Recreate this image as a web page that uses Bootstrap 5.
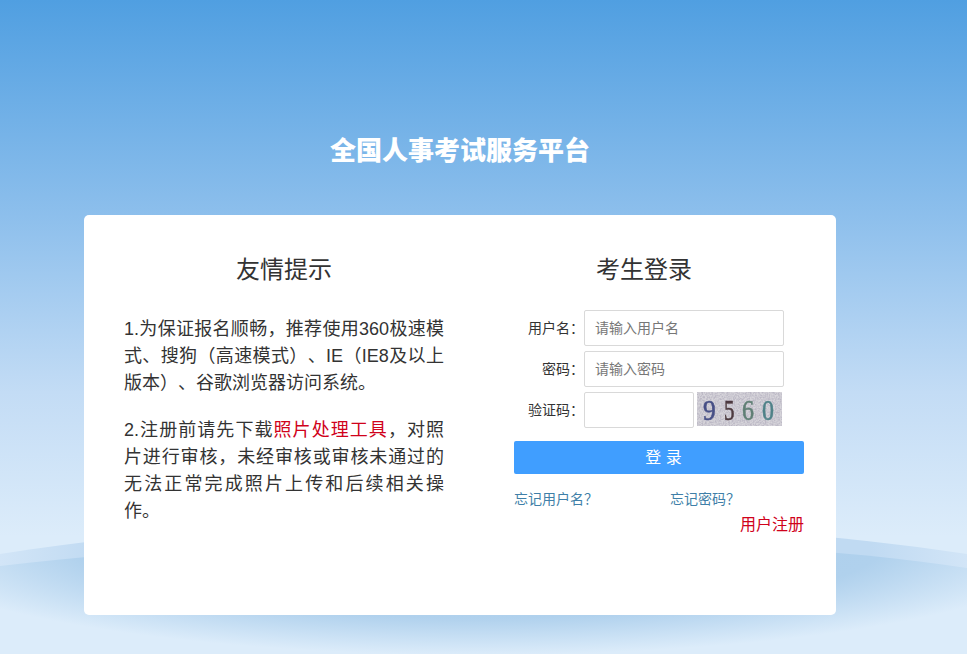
<!doctype html>
<html lang="zh-CN">

<head>
  <meta charset="utf-8">
  <meta name="viewport" content="width=device-width, initial-scale=1">
  <title>全国人事考试服务平台</title>
  <link href="https://cdn.jsdelivr.net/npm/bootstrap@5.3.5/dist/css/bootstrap.min.css" rel="stylesheet">
  <style>
    html, body {
      height: 100%;
    }

    body {
      font-family: "Liberation Sans", "Noto Sans CJK SC", sans-serif;
      background: linear-gradient(180deg, #509fe1 0%, #8dbfec 33%, #c3dcf5 60%, #dcecfa 82%, #dcecfa 100%);
      color: #333;
      overflow: hidden;
      text-spacing-trim: space-all;
      font-kerning: none;
    }

    .bg-waves {
      position: absolute;
      left: 0;
      top: 0;
      width: 967px;
      height: 654px;
    }

    .login-page {
      position: relative;
      width: 752px;
      margin-left: 84px;
      padding-top: 134px;
    }

    .site-title {
      font-size: 26px;
      line-height: 34px;
      font-weight: 900;
      color: #fff;
      margin: 0 0 47px;
    }

    .login-box {
      height: 400px;
      padding: 40px 32px 0 40px;
      border-radius: 5px;
    }

    .tips-col {
      width: 320px;
    }

    .form-col {
      width: 290px;
    }

    .box-heading {
      font-size: 24px;
      line-height: 30px;
      font-weight: 400;
      margin: 0 0 31px;
    }

    .form-heading {
      width: 260px;
      margin-bottom: 25px;
    }

    .tips-col p {
      font-size: 18px;
      line-height: 27px;
      text-align: justify;
      margin: 0 0 20px;
    }

    .red-link {
      color: #d0021b;
      text-decoration: none;
    }

    .field-row {
      height: 36px;
      margin-bottom: 5px;
    }

    .field-label {
      width: 70px;
      font-size: 14px;
      text-align: right;
      color: #333;
      margin: 0;
    }

    .field-input {
      width: 200px;
      height: 36px;
      padding: 6px 10px;
      font-size: 14px;
      border: 1px solid #d9d9d9;
      border-radius: 2px;
    }

    .field-input::placeholder {
      color: #777;
    }

    .code-input {
      width: 110px;
    }

    .captcha {
      width: 85px;
      height: 34px;
      margin-left: 3px;
      align-self: flex-start;
    }

    .login-btn {
      height: 33px;
      margin-top: 8px;
      padding: 0 0 0 9px;
      font-size: 16px;
      background: #409eff;
      border: 0;
      border-radius: 2px;
      color: #fff;
    }

    .login-links {
      margin-top: 14px;
      font-size: 14px;
      line-height: 22px;
    }

    .login-links a {
      color: #3f7fa8;
      text-decoration: none;
    }

    .forget-name {
      width: 156px;
    }

    .register-line {
      font-size: 16px;
      line-height: 22px;
      margin-top: 4px;
    }
  </style>
</head>

<body>
  <svg class="bg-waves" viewBox="0 0 967 654" aria-hidden="true">
    <defs>
      <radialGradient id="lowGrad" gradientUnits="userSpaceOnUse" cx="0" cy="0" r="1" gradientTransform="translate(480 540) scale(600 115)">
        <stop offset="0" stop-color="#a8cceb"/>
        <stop offset="0.68" stop-color="#b0d1ed"/>
        <stop offset="1" stop-color="#dcecfa"/>
      </radialGradient>
      <linearGradient id="bandGrad" x1="0" y1="0" x2="1" y2="0">
        <stop offset="0" stop-color="#d2e5f7"/>
        <stop offset="0.1" stop-color="#c0daf2"/>
        <stop offset="0.9" stop-color="#c0daf2"/>
        <stop offset="1" stop-color="#d2e5f7"/>
      </linearGradient>
    </defs>
    <path d="M0 554C150 530 300 522 480 522C660 522 820 532 967 554V654H0Z" fill="url(#bandGrad)"/>
    <path d="M0 566C150 548 300 540 480 540C660 540 820 546 967 568V654H0Z" fill="url(#lowGrad)"/>
  </svg>

  <div class="login-page">
    <h1 class="site-title text-center">全国人事考试服务平台</h1>

    <div class="login-box bg-white d-flex justify-content-between">
      <div class="tips-col">
        <h2 class="box-heading text-center">友情提示</h2>
        <p>1.为保证报名顺畅，推荐使用360极速模式、搜狗（高速模式）、IE（IE8及以上版本）、谷歌浏览器访问系统。</p>
        <p>2.注册前请先下载<a href="#" class="red-link">照片处理工具</a>，对照片进行审核，未经审核或审核未通过的无法正常完成照片上传和后续相关操作。</p>
      </div>

      <div class="form-col">
        <h2 class="box-heading form-heading text-center">考生登录</h2>
        <form>
          <div class="field-row d-flex align-items-center">
            <label class="field-label" for="userName">用户名：</label>
            <input class="form-control field-input" id="userName" type="text" placeholder="请输入用户名">
          </div>
          <div class="field-row d-flex align-items-center">
            <label class="field-label" for="userPwd">密码：</label>
            <input class="form-control field-input" id="userPwd" type="password" placeholder="请输入密码">
          </div>
          <div class="field-row d-flex align-items-center">
            <label class="field-label" for="userCode">验证码：</label>
            <input class="form-control field-input code-input" id="userCode" type="text">
            <svg class="captcha" viewBox="0 0 85 34" role="img" aria-label="验证码">
              <defs>
                <filter id="grain" x="0" y="0" width="100%" height="100%">
                  <feTurbulence type="fractalNoise" baseFrequency="0.6" numOctaves="3" seed="4"/>
                  <feColorMatrix values="0 0 0 0 0.5  0 0 0 0 0.48  0 0 0 0 0.56  2.4 0 0 0 -0.8"/>
                </filter>
                <filter id="soft">
                  <feGaussianBlur stdDeviation="0.4"/>
                </filter>
              </defs>
              <rect width="85" height="34" fill="#d6d4da"/>
              <rect width="85" height="34" filter="url(#grain)"/>
              <g font-family="Liberation Serif, serif" font-size="30" filter="url(#soft)" stroke-width="0.6">
                <text transform="translate(6 28) scale(.85 1)" fill="#464f86" stroke="#464f86">9</text>
                <text transform="translate(27 28) scale(.7 1)" fill="#4d3a3f" stroke="#4d3a3f">5</text>
                <text transform="translate(45 28) scale(.8 1)" fill="#5f7f74" stroke="#5f7f74">6</text>
                <text transform="translate(65 28) scale(.8 1)" fill="#4f8288" stroke="#4f8288">0</text>
              </g>
            </svg>
          </div>
          <button type="button" class="btn login-btn w-100">登 录</button>
          <div class="login-links d-flex">
            <a href="#" class="forget-name">忘记用户名？</a>
            <a href="#">忘记密码？</a>
          </div>
          <div class="register-line text-end"><a href="#" class="red-link">用户注册</a></div>
        </form>
      </div>
    </div>
  </div>

  <script src="https://cdn.jsdelivr.net/npm/bootstrap@5.3.5/dist/js/bootstrap.bundle.min.js"></script>
</body>

</html>
